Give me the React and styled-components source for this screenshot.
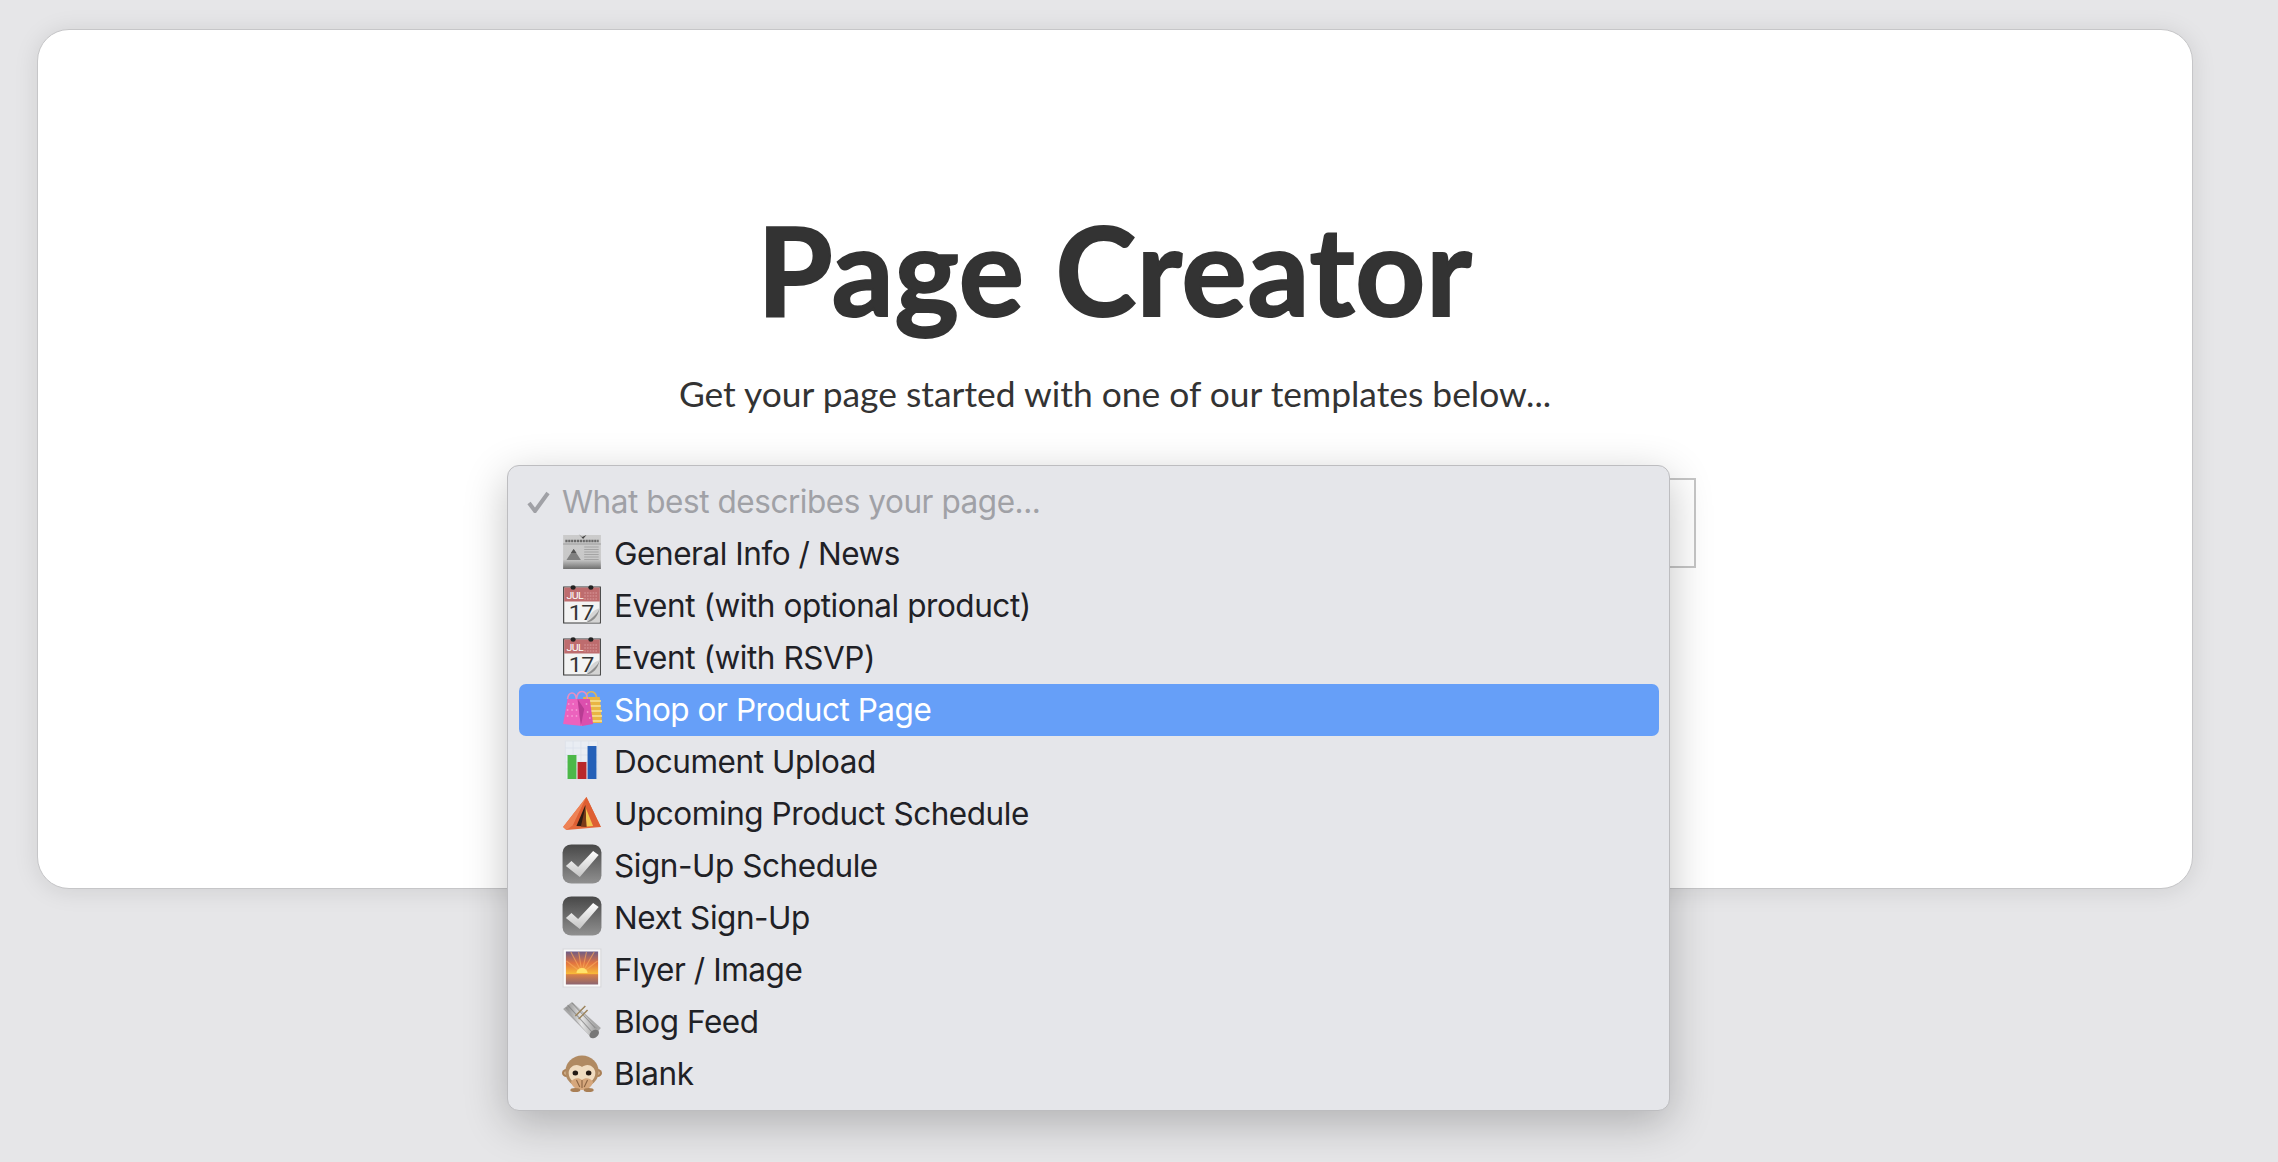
import React from 'react';
import styled, { createGlobalStyle } from 'styled-components';

const GlobalStyle = createGlobalStyle`
  html, body {
    margin: 0;
    padding: 0;
    height: 100%;
    overflow: hidden;
    background: #e6e6e8;
  }
`;

const Page = styled.div`
  box-sizing: border-box;
  height: 1162px;
  padding: 29px 85px 0 37px;
`;

const Card = styled.main`
  box-sizing: border-box;
  height: 860px;
  padding-top: 166px;
  display: flex;
  flex-direction: column;
  align-items: center;
  background: #fff;
  border-radius: 32px;
  border: 1px solid #c6c6c8;
  box-shadow: 0 2px 24px rgba(0, 0, 0, 0.1);
  font-family: Lato, sans-serif;
  color: #333;
`;

const Title = styled.h1`
  margin: 0;
  font-size: 122px;
  line-height: 146px;
  font-weight: 700;
  letter-spacing: 0.9px;
  -webkit-text-stroke: 2px #333;
`;

const Subtitle = styled.p`
  margin: 30px 0 0;
  font-size: 35.4px;
  line-height: 44px;
  font-weight: 400;
`;

const SelectBox = styled.div`
  position: relative;
  box-sizing: border-box;
  width: 1162px;
  height: 90px;
  margin-top: 62px;
  border: 2px solid #c6c6c6;
  background: #fff;
`;

const Menu = styled.ul`
  position: absolute;
  left: -29px;
  top: -15px;
  box-sizing: border-box;
  width: 1163px;
  margin: 0;
  padding: 10px 10px 10px 11px;
  list-style: none;
  background: #e5e6ea;
  border: 1px solid #bdbdc0;
  border-radius: 12px;
  box-shadow: 0 12px 44px rgba(0, 0, 0, 0.24);
  font-family: Inter, sans-serif;
  font-size: 31.5px;
  letter-spacing: -0.45px;
`;

const Option = styled.li`
  box-sizing: border-box;
  display: flex;
  align-items: center;
  height: 52px;
  padding: 0 0 1px 43px;
  border-radius: 7px;
  color: ${({ $active, $muted }) => ($active ? '#fff' : $muted ? '#a0a1a6' : '#1f2126')};
  background: ${({ $active }) => ($active ? '#669ff8' : 'transparent')};
  position: relative;
`;

const Tick = styled.svg`
  position: absolute;
  left: 7px;
  top: 15px;
  width: 25px;
  height: 22px;
`;

const IconSlot = styled.span`
  display: block;
  width: 40px;
  margin-right: 12px;
  margin-bottom: 3px;
`;

const Icon = styled.svg`
  display: block;
  width: 40px;
  height: 40px;
  overflow: visible;
`;

const NewsIcon = () => (
  <Icon viewBox="0 0 36 40" preserveAspectRatio="none">
    <defs>
      <linearGradient id="news" x1="0" y1="0" x2="0" y2="1">
        <stop offset="0" stopColor="#cbcbcb" />
        <stop offset="0.72" stopColor="#c8c8c8" />
        <stop offset="1" stopColor="#6f6f6f" />
      </linearGradient>
    </defs>
    <rect x="1" y="3" width="34" height="34" fill="url(#news)" />
    <path d="M15 2l3 3 4-2-3 4z" fill="#444" />
    <path d="M3 9h30" stroke="#6a6a6a" strokeWidth="2.500" strokeDasharray="2 .6" />
    <path d="M1 12h34" stroke="#8a8a8a" strokeWidth="0.700" />
    <path d="M4 28l6.500-11L17 28z" fill="#808080" />
    <path d="M8 21l2.500-4 2.500 4z" fill="#555" />
    <path d="M20 15h13M20 17.500h13M20 20h13M20 22.500h13M20 25h13M20 27.500h13" stroke="#a4a4a4" strokeWidth="1" />
  </Icon>
);

const CalendarIcon = () => (
  <Icon viewBox="0 0 36 40" preserveAspectRatio="none">
    <rect x="1.500" y="3" width="33" height="36" fill="#f3f3f3" stroke="#3a3a3a" strokeWidth="1" />
    <rect x="2" y="3.500" width="32" height="14" fill="#be6c6e" />
    <circle cx="10" cy="3.500" r="2.300" fill="#222" />
    <circle cx="26" cy="3.500" r="2.300" fill="#222" />
    <text x="4" y="15" fontFamily="Roboto, sans-serif" fontSize="9.500" fill="#fff">JUL</text>
    <path d="M20 9h12M20 12h12M20 15h12" stroke="#d99a9b" strokeWidth="1" strokeDasharray="1.500 1" />
    <text x="6" y="36" fontFamily="Roboto, sans-serif" fontSize="21" fill="#333">17</text>
    <path d="M34 24c-6 2-10 7-12 14.500h12z" fill="#d4d4d4" />
    <path d="M34 24c-2 6-7 10-12 14.500 6-1 10-5 12-14.500z" fill="#8e8e8e" />
  </Icon>
);

const BagsIcon = () => (
  <Icon viewBox="0 0 36 40" preserveAspectRatio="none">
    <path d="M22 9c0-7 8-7 9 0" fill="none" stroke="#e0b558" strokeWidth="1.500" />
    <path d="M19 9h15l2 26H19z" fill="#e9b544" />
    <path d="M24 13h11M24 18h11M24 23h12M24 28h12M24 33h12" stroke="#f4d884" strokeWidth="2" />
    <path d="M5 11c1-8 7-8 8 0M13 11c1-10 9-10 10 0" fill="none" stroke="#e88ec2" strokeWidth="1.500" />
    <path d="M5 11h11l3 6-1 21-17-2z" fill="#ec62bd" />
    <path d="M14 11h11l3 25-10 2-2-8z" fill="#dc4fae" />
    <path d="M14 11l3 27 3-17z" fill="#b83c93" />
    <path d="M6 16h.1M10 16h.1M5 22h.1M9 22h.1M13 22h.1M5 28h.1M9 28h.1M13 28h.1M22 16h.1M23 24h.1M25 30h.1" stroke="#f6a8dc" strokeWidth="1.600" strokeLinecap="round" />
  </Icon>
);

const ChartIcon = () => (
  <Icon viewBox="0 0 36 40" preserveAspectRatio="none">
    <rect x="3" y="1" width="29" height="38" fill="#e9edf3" stroke="#dfe3ea" />
    <path d="M3 8h29M3 15h29M3 22h29M3 29h29M10 1v37M17 1v37M24 1v37" stroke="#d9e1ec" strokeWidth="0.700" />
    <rect x="5" y="15" width="8" height="24" fill="#4cb849" />
    <rect x="14" y="22" width="8" height="17" fill="#b9282a" />
    <rect x="23" y="6" width="8" height="33" fill="#2460b8" />
  </Icon>
);

const TentIcon = () => (
  <Icon viewBox="0 0 36 40" preserveAspectRatio="none">
    <path d="M22 5L1 35l3 3 31-3z" fill="#e4693c" />
    <path d="M22 5L1 35l3 3 6-5z" fill="#ee8255" />
    <path d="M22 5L10 33l25 2z" fill="#de5f33" />
    <path d="M21 13l-8 21 9 .5z" fill="#2d1b12" />
    <path d="M21 15l1 19.500 6-.5z" fill="#f2c64f" />
    <path d="M21 15l-4 19.500 5 .5z" fill="#7a3a18" />
  </Icon>
);

const CheckIcon = ({ id }) => (
  <Icon viewBox="0 0 36 40" preserveAspectRatio="none">
    <defs>
      <linearGradient id={id} x1="0" y1="0" x2="0" y2="1">
        <stop offset="0" stopColor="#484848" />
        <stop offset="1" stopColor="#909090" />
      </linearGradient>
      <linearGradient id={`${id}-mark`} x1="0" y1="0" x2="0" y2="1">
        <stop offset="0" stopColor="#fff" />
        <stop offset="1" stopColor="#c4c4c4" />
      </linearGradient>
    </defs>
    <rect x="0.500" y="0.500" width="35" height="39" rx="8" fill={`url(#${id})`} />
    <path d="M3.500 22l5-5 6 6L28 7l5 4-17 22z" fill={`url(#${id}-mark)`} />
  </Icon>
);

const SunsetIcon = () => (
  <Icon viewBox="0 0 36 40" preserveAspectRatio="none">
    <defs>
      <linearGradient id="sky" x1="0" y1="0" x2="0" y2="1">
        <stop offset="0" stopColor="#6d5c86" />
        <stop offset="0.35" stopColor="#e2733f" />
        <stop offset="0.68" stopColor="#f8bb39" />
        <stop offset="0.7" stopColor="#d98146" />
        <stop offset="1" stopColor="#8c6470" />
      </linearGradient>
    </defs>
    <rect x="1" y="1" width="34" height="38" fill="#fafafa" stroke="#d8d8dc" />
    <rect x="3.500" y="3.500" width="29" height="33" fill="url(#sky)" />
    <path d="M18 25L8 4M18 25L15 4M18 25l4-21M18 25L29 4M18 25L4 13M18 25l14-12" stroke="#f8a75a" strokeWidth="1" opacity="0.7" />
    <path d="M13 25a5 5 0 0 1 10 0z" fill="#ffe36a" />
  </Icon>
);

const RollIcon = () => (
  <Icon viewBox="0 0 36 40" preserveAspectRatio="none">
    <defs>
      <linearGradient id="roll" x1="0" y1="0" x2="1" y2="0">
        <stop offset="0" stopColor="#8a8a8a" />
        <stop offset="0.5" stopColor="#e6e6e6" />
        <stop offset="1" stopColor="#9a9a9a" />
      </linearGradient>
    </defs>
    <path d="M1 9l8-7 26 26-8 10z" fill="#a8a8a8" />
    <path d="M3 8l7-5 22 25-7 8z" fill="url(#roll)" />
    <path d="M5 5l22 27M9 3l21 25" stroke="#7d7d7d" strokeWidth="1" opacity="0.7" />
    <path d="M12 16l9-10M15 19l8-9" stroke="#9c845c" strokeWidth="1.300" />
    <ellipse cx="29" cy="34" rx="5" ry="3.500" transform="rotate(-45 29 34)" fill="#777" />
  </Icon>
);

const MonkeyIcon = () => (
  <Icon viewBox="0 0 36 40" preserveAspectRatio="none">
    <circle cx="4" cy="21" r="4" fill="#a97f55" />
    <circle cx="32" cy="21" r="4" fill="#a97f55" />
    <circle cx="4" cy="21" r="2" fill="#e0c3a0" />
    <circle cx="32" cy="21" r="2" fill="#e0c3a0" />
    <ellipse cx="18" cy="19.500" rx="15" ry="16" fill="#b08a62" />
    <path d="M6 21c0-5 4-8 7-8 2 0 4 1 5 2 1-1 3-2 5-2 3 0 7 3 7 8 0 7-6 12-12 12S6 28 6 21z" fill="#f0dcc0" />
    <circle cx="12" cy="21" r="2.500" fill="#241a14" />
    <circle cx="24" cy="21" r="2.500" fill="#241a14" />
    <path d="M8 30c2-4 7-5 10-2 3-3 8-2 10 2-1 4-4 8-10 8S9 34 8 30z" fill="#d6a77c" />
    <path d="M13 28l3 7M18 28v8M23 28l-3 7" stroke="#8b6443" strokeWidth="1" />
    <ellipse cx="12" cy="38" rx="4.500" ry="2" fill="#a97f55" />
    <ellipse cx="24" cy="38" rx="4.500" ry="2" fill="#a97f55" />
  </Icon>
);

const options = [
  { label: 'General Info / News', icon: <NewsIcon /> },
  { label: 'Event (with optional product)', icon: <CalendarIcon /> },
  { label: 'Event (with RSVP)', icon: <CalendarIcon /> },
  { label: 'Shop or Product Page', icon: <BagsIcon />, active: true },
  { label: 'Document Upload', icon: <ChartIcon /> },
  { label: 'Upcoming Product Schedule', icon: <TentIcon /> },
  { label: 'Sign-Up Schedule', icon: <CheckIcon id="check-a" /> },
  { label: 'Next Sign-Up', icon: <CheckIcon id="check-b" /> },
  { label: 'Flyer / Image', icon: <SunsetIcon /> },
  { label: 'Blog Feed', icon: <RollIcon /> },
  { label: 'Blank', icon: <MonkeyIcon /> },
];

export default function App() {
  return (
    <Page>
      <GlobalStyle />
      <Card>
        <Title>Page Creator</Title>
        <Subtitle>Get your page started with one of our templates below...</Subtitle>
        <SelectBox>
          <Menu>
            <Option $muted>
              <Tick viewBox="0 0 25 22">
                <path d="M3 12l6 8L22 2" fill="none" stroke="#a0a1a6" strokeWidth="4" />
              </Tick>
              What best describes your page...
            </Option>
            {options.map((option) => (
              <Option key={option.label} $active={option.active}>
                <IconSlot>{option.icon}</IconSlot>
                {option.label}
              </Option>
            ))}
          </Menu>
        </SelectBox>
      </Card>
    </Page>
  );
}
